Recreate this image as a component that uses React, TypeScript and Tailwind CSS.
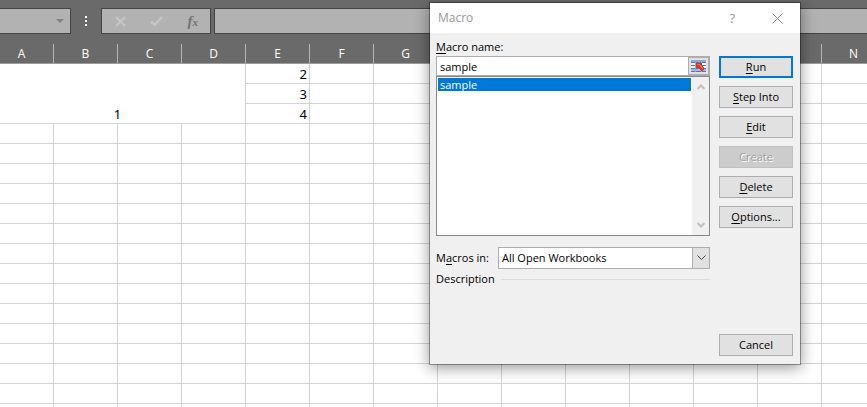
import React from 'react';
import clsx from 'clsx';

const columns = ['A', 'B', 'C', 'D', 'E', 'F', 'G', 'H', 'I', 'J', 'K', 'L', 'M', 'N'];
const rowCount = 18;

// Cells A1:D3 are merged, so the first three rows start at column E
const mergedColumns = 4;
const mergedRows = 3;
const columnE = ['2', '3', '4'];

const FormulaBar: React.FC = () => (
  <div className="flex h-11 items-start pt-2">
    <div className="flex h-[26px] w-[71px] items-center justify-end border border-l-0 border-[#444] bg-[#b2b2b2] pr-1.5">
      <button type="button" aria-label="Name box list" className="p-0">
        <svg width="8" height="4" viewBox="0 0 8 4" fill="#7d8083">
          <path d="M0 0h8L4 4z" />
        </svg>
      </button>
    </div>
    <svg className="mx-3.5 mt-2" width="2" height="10" viewBox="0 0 2 10" fill="#fff">
      <path d="M0 0h2v2H0zM0 4h2v2H0zM0 8h2v2H0z" />
    </svg>
    <div className="flex h-[26px] w-[110px] items-center justify-between border border-[#444] bg-[#b2b2b2] px-3">
      <button type="button" aria-label="Cancel entry" className="pl-px">
        <svg width="11" height="11" viewBox="0 0 11 11" fill="none" stroke="#c6c6c6" strokeWidth="2">
          <path d="M1 1l9 9M10 1L1 10" />
        </svg>
      </button>
      <button type="button" aria-label="Enter">
        <svg width="13" height="11" viewBox="0 0 13 11" fill="none" stroke="#c6c6c6" strokeWidth="2.500">
          <path d="M1 5.500l3.500 3.500L12 1" />
        </svg>
      </button>
      <button
        type="button"
        className="font-['Liberation_Serif',serif] text-[15px] leading-4 font-bold text-[#747474] italic"
      >
        f<span className="text-[11px]">x</span>
      </button>
    </div>
    <input
      aria-label="Formula bar"
      className="ml-[3px] h-[26px] min-w-0 flex-1 border border-r-0 border-[#444] bg-[#b2b2b2] px-1 outline-none"
    />
  </div>
);

const Sheet: React.FC = () => (
  <table className="-ml-2.5 w-[896px] table-fixed border-separate border-spacing-0">
    <thead>
      <tr>
        {columns.map((name) => (
          <th
            key={name}
            className="h-5 border-r border-b border-r-[#b4b4b4] border-b-[#9c9c9c] bg-[#6a6a6a] p-0 font-['Open_Sans',sans-serif] text-xs leading-4 font-normal text-white"
          >
            {name}
          </th>
        ))}
      </tr>
    </thead>
    <tbody>
      {Array.from({ length: rowCount }, (_, row) => (
        <tr key={row}>
          {row === 0 && (
            <td
              colSpan={mergedColumns}
              rowSpan={mergedRows}
              className="border-r border-b border-[#d4d4d4] p-0 text-center align-bottom leading-[18px]"
            >
              1
            </td>
          )}
          {columns.slice(row < mergedRows ? mergedColumns : 0).map((name) => (
            <td
              key={name}
              className="h-5 border-r border-b border-[#d4d4d4] py-0 pr-0.5 pl-0 text-right align-bottom leading-[18px]"
            >
              {name === 'E' && columnE[row]}
            </td>
          ))}
        </tr>
      ))}
    </tbody>
  </table>
);

interface DialogButtonProps {
  label: string;
  accessKey?: boolean;
  primary?: boolean;
  disabled?: boolean;
}

const DialogButton: React.FC<DialogButtonProps> = ({ label, accessKey = true, primary, disabled }) => (
  <button
    type="button"
    disabled={disabled}
    className={clsx(
      'flex h-[22px] w-full items-center justify-center',
      primary ? 'border-2 border-[#0078d7] bg-[#e1e1e1]' : 'border',
      !primary && !disabled && 'border-[#adadad] bg-[#e1e1e1]',
      disabled && 'border-[#bfbfbf] bg-[#ccc] text-[#a0a0a0] [text-shadow:1px_1px_0_#fff]'
    )}
  >
    {accessKey ? (
      <span>
        <u className="underline-offset-2">{label[0]}</u>
        {label.slice(1)}
      </span>
    ) : (
      label
    )}
  </button>
);

const RangeIcon: React.FC = () => (
  <svg width="15" height="12" viewBox="0 0 15 12" shapeRendering="crispEdges">
    <path d="M0 0h15v12H0z" fill="#eef2fa" />
    <path d="M0 0h15v2H0z" fill="#8fa9d8" />
    <path d="M0 2h15v1H0zM0 5h15v1H0zM0 8h15v1H0zM0 11h15v1H0z" fill="#5878b4" />
    <path d="M4 2h1v10H4zM10 2h1v10h-1z" fill="#8fa9d8" />
    <path d="M0 9h4v2H0zM5 9h5v2H5zM11 9h4v2h-4z" fill="#a3bce8" />
    <path d="M5 3h6v1l-1 1 3 3v1l-2 2h-1L7 7 6 8H5z" fill="#d63a1e" />
    <path d="M6 4h3v1l3 3-1 1-4-4H6z" fill="#ee6a50" />
  </svg>
);

const MacroDialog: React.FC = () => (
  <div
    role="dialog"
    aria-label="Macro"
    className="absolute top-0.5 left-[429px] w-[372px] border border-black/35 bg-[#f0f0f0] bg-clip-padding font-['Open_Sans',sans-serif] text-[11px] leading-4 text-black shadow-[0_3px_14px_rgba(0,0,0,0.4)]"
  >
    <div className="flex h-[30px] items-center bg-white pr-[17px] pl-2 text-[#999]">
      <h1 className="flex-1 text-xs">Macro</h1>
      <button type="button" aria-label="Help" className="mr-[37px] text-[13px]">
        ?
      </button>
      <button type="button" aria-label="Close">
        <svg width="11" height="11" viewBox="0 0 11 11" fill="none" stroke="#888">
          <path d="M.5 .5l10 10M10.500 .5l-10 10" />
        </svg>
      </button>
    </div>

    <div className="flex gap-[9px] pt-1.5 pr-[7px] pb-2 pl-1.5">
      <div className="min-w-0 flex-1">
        <label htmlFor="macro-name" className="block h-[17px]">
          <u className="underline-offset-2">M</u>acro name:
        </label>
        <div className="flex h-5 border border-[#adadad] bg-white">
          <input
            id="macro-name"
            defaultValue="sample"
            className="min-w-0 flex-1 pt-0.5 pl-[3px] outline-none"
          />
          <button
            type="button"
            aria-label="Select range"
            className="flex w-[21px] items-center justify-center border border-[#adadad] bg-[#e1e1e1]"
          >
            <RangeIcon />
          </button>
        </div>

        {/* Macro list */}
        <div className="flex h-40 border border-[#828790] bg-white">
          <select
            size={8}
            aria-label="Macros"
            defaultValue="sample"
            className="min-w-0 flex-1 appearance-none overflow-hidden p-px outline-none"
          >
            <option
              value="sample"
              className="flex h-[13px] min-h-0 items-center bg-[linear-gradient(#0078d7,#0078d7)] p-0 pl-0.5 leading-[13px] text-white checked:text-white"
            >
              sample
            </option>
          </select>
          <div className="flex w-[17px] flex-col items-center justify-between bg-[#f0f0f0] py-[7px]">
            <svg width="8" height="6" viewBox="0 0 8 6" fill="none" stroke="#bfbfbf" strokeWidth="2">
              <path d="M.5 5L4 1.500 7.500 5" />
            </svg>
            <svg width="8" height="6" viewBox="0 0 8 6" fill="none" stroke="#bfbfbf" strokeWidth="2">
              <path d="M.5 1L4 4.500 7.500 1" />
            </svg>
          </div>
        </div>

        <div className="mt-[11px] flex items-center">
          <label htmlFor="macros-in" className="w-[62px]">
            M<u className="underline-offset-2">a</u>cros in:
          </label>
          <div className="grid flex-1">
            <select
              id="macros-in"
              className="col-start-1 row-start-1 h-[22px] w-full appearance-none border border-[#adadad] bg-white pl-[3px] outline-none"
            >
              <option>All Open Workbooks</option>
            </select>
            <span className="pointer-events-none col-start-1 row-start-1 flex w-[18px] items-center justify-center justify-self-end border border-[#adadad] bg-[#e1e1e1]">
              <svg width="9" height="6" viewBox="0 0 9 6" fill="none" stroke="#444">
                <path d="M.5 .5l4 4 4-4" />
              </svg>
            </span>
          </div>
        </div>

        <div className="mt-0.5 flex items-center gap-1.5">
          <span>Description</span>
          <span className="h-px flex-1 bg-[#dcdcdc]" />
        </div>
      </div>

      {/* Actions */}
      <div className="flex h-[317px] w-[74px] flex-col gap-2 pt-[17px]">
        <DialogButton label="Run" primary />
        <DialogButton label="Step Into" />
        <DialogButton label="Edit" />
        <DialogButton label="Create" accessKey={false} disabled />
        <DialogButton label="Delete" />
        <DialogButton label="Options..." />
        <div className="mt-auto">
          <DialogButton label="Cancel" accessKey={false} />
        </div>
      </div>
    </div>
  </div>
);

const App: React.FC = () => {
  return (
    <div className="relative h-screen overflow-hidden bg-white font-['Noto_Sans',sans-serif] text-[13px] text-black">
      <div className="bg-[#6a6a6a]">
        <FormulaBar />
      </div>
      <Sheet />
      <MacroDialog />
    </div>
  );
};

export default App;
